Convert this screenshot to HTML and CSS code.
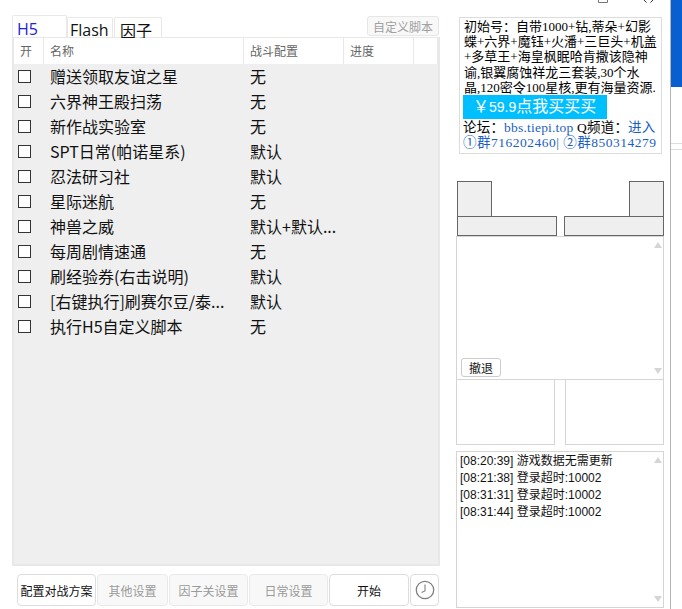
FILE: index.html
```html
<!DOCTYPE html>
<html>
<head>
  <meta charset="utf-8" />
  <title>H5</title>
  <link rel="stylesheet" href="styles.css">
</head>
<body>
<div class="app">
  <div class="left">
    <div class="tabs">
      <div class="tab active">H5</div>
      <div class="tab flash">Flash</div>
      <div class="tab yinzi">因子</div>
      <button class="scriptBtn">自定义脚本</button>
    </div>
    <div class="panel">
      <div class="head">
        <div class="hcell c1">开</div>
        <div class="hcell c2">名称</div>
        <div class="hcell c3">战斗配置</div>
        <div class="hcell c4">进度</div>
        <div class="hcell c5"></div>
      </div>
      <div class="list">
        <div class="row"><span class="chk"></span><span class="name">赠送领取友谊之星</span><span class="conf">无</span></div>
        <div class="row"><span class="chk"></span><span class="name">六界神王殿扫荡</span><span class="conf">无</span></div>
        <div class="row"><span class="chk"></span><span class="name">新作战实验室</span><span class="conf">无</span></div>
        <div class="row"><span class="chk"></span><span class="name">SPT日常(帕诺星系)</span><span class="conf">默认</span></div>
        <div class="row"><span class="chk"></span><span class="name">忍法研习社</span><span class="conf">默认</span></div>
        <div class="row"><span class="chk"></span><span class="name">星际迷航</span><span class="conf">无</span></div>
        <div class="row"><span class="chk"></span><span class="name">神兽之威</span><span class="conf">默认+默认...</span></div>
        <div class="row"><span class="chk"></span><span class="name">每周剧情速通</span><span class="conf">无</span></div>
        <div class="row"><span class="chk"></span><span class="name">刷经验券(右击说明)</span><span class="conf">默认</span></div>
        <div class="row"><span class="chk"></span><span class="name">[右键执行]刷赛尔豆/泰...</span><span class="conf">默认</span></div>
        <div class="row"><span class="chk"></span><span class="name">执行H5自定义脚本</span><span class="conf">无</span></div>
      </div>
    </div>
    <div class="footer">
      <button class="btn b1">配置对战方案</button>
      <button class="btn b2 off">其他设置</button>
      <button class="btn b3 off">因子关设置</button>
      <button class="btn b4 off">日常设置</button>
      <button class="btn b5">开始</button>
      <button class="btn b6">
        <svg width="20" height="20" viewBox="0 0 20 20"><circle cx="10" cy="10" r="8.7" fill="none" stroke="#808080" stroke-width="1.3"/><path d="M10 4.5V11L6.5 12.5" fill="none" stroke="#808080" stroke-width="1.1"/></svg>
      </button>
    </div>
  </div>
  <div class="right">
    <div class="ad">
      <div class="adText">
        <div>初始号：自带1000+钻,蒂朵+幻影</div>
        <div>蝶+六界+魔钰+火潘+三巨头+机盖</div>
        <div>+多草王+海皇枫眠哈肯撒该隐神</div>
        <div>谕,银翼腐蚀祥龙三套装,30个水</div>
        <div>晶,120密令100星核,更有海量资源.</div>
      </div>
      <div class="buy">￥<span class="price">59.9</span>点我买买买</div>
      <div class="adLine">论坛：<span class="link">bbs.tiepi.top</span> Q频道：<span class="link">进入</span></div>
      <div class="adLine link groups">①群716202460| ②群850314279</div>
    </div>
    <div class="shapes">
      <div class="shape">
        <div class="box"></div>
        <div class="bar"></div>
      </div>
      <div class="shape flip">
        <div class="box"></div>
        <div class="bar"></div>
      </div>
    </div>
    <div class="scrollBox mid">
      <i class="arrow up"></i>
      <button class="retreat">撤退</button>
      <i class="arrow down"></i>
    </div>
    <div class="twoBox">
      <div class="emptyBox"></div>
      <div class="emptyBox"></div>
    </div>
    <div class="scrollBox log">
      <i class="arrow up"></i>
      <div>[08:20:39] 游戏数据无需更新</div>
      <div>[08:21:38] 登录超时:10002</div>
      <div>[08:31:31] 登录超时:10002</div>
      <div>[08:31:44] 登录超时:10002</div>
      <i class="arrow down"></i>
    </div>
  </div>
  <svg class="winBtns" width="56" height="3" viewBox="0 0 56 3">
    <path d="M0.5 0V2.5H9.5V0" fill="none" stroke="#777" stroke-width="1"/>
    <path d="M46 0L48.5 2.5M55 0L52.5 2.5" fill="none" stroke="#333" stroke-width="1"/>
  </svg>
  <div class="edge">
    <div class="edgeBlue"></div>
    <div class="edgeLine"></div>
    <div class="edgeLine second"></div>
  </div>
</div>
</body>
</html>
```

FILE: styles.css
```css
* {
  box-sizing: border-box;
}

html, body {
  margin: 0;
  height: 100%;
  background: #fff;
  overflow: hidden;
}

body {
  font-family: "Noto Sans CJK SC", "Liberation Sans", sans-serif;
  color: #111;
}

.app {
  display: flex;
  width: 682px;
  height: 609px;
}

.left {
  width: 440px;
  padding: 15px 0 0 12px;
}

.tabs {
  display: flex;
  align-items: flex-end;
  height: 22px;
}

.tab {
  border: 1px solid #e8e8e8;
  border-bottom: none;
  border-radius: 2px 2px 0 0;
  font-size: 16px;
  line-height: 20px;
  height: 20px;
  padding-left: 4px;
  margin-right: 1px;
}

.tab.active {
  width: 55px;
  height: 22px;
  color: #2222dd;
  background: #fff;
  font-family: "Open Sans", sans-serif;
  line-height: 26px;
  margin-right: 0;
}

.tab.flash {
  width: 46px;
  padding-left: 2px;
  font-family: "Open Sans", sans-serif;
  line-height: 24px;
}

.tab.yinzi {
  width: 48px;
  padding-left: 5px;
  line-height: 24px;
}

.scriptBtn {
  margin-left: auto;
  margin-right: 1px;
  margin-bottom: 1px;
  width: 72px;
  height: 20px;
  padding: 0;
  font: 12px "Noto Sans CJK SC", sans-serif;
  color: #a0a0a0;
  background: #f8f8f8;
  border: 1px solid #e6e6e6;
  border-radius: 3px;
}

.panel {
  width: 428px;
  height: 529px;
  border: 2px solid #e8e8e8;
  border-top-width: 1px;
  display: flex;
  flex-direction: column;
}

.head {
  display: flex;
  height: 26px;
  background: #fff;
  font-size: 12px;
  color: #666;
}

.hcell {
  border-right: 1px solid #e8e8e8;
  padding-left: 6px;
  line-height: 26px;
}

.c1 { width: 30px; }
.c2 { width: 200px; }
.c3 { width: 100px; }
.c4 { width: 70px; }
.c5 { width: 24px; }

.list {
  flex: 1;
  background: #efefef;
}

.row {
  display: flex;
  align-items: center;
  height: 25px;
  font-size: 16px;
  white-space: nowrap;
}

.chk {
  width: 13px;
  height: 13px;
  margin-left: 4px;
  margin-right: 19px;
  border: 1px solid #333;
  background: #fff;
}

.name {
  width: 200px;
  padding-bottom: 2px;
}

.conf {
  padding-bottom: 2px;
}

.footer {
  display: flex;
  align-items: center;
  margin-top: 8px;
  padding-left: 5px;
  gap: 1px;
}

.btn {
  height: 32px;
  padding: 0;
  font: 12px "Noto Sans CJK SC", sans-serif;
  color: #111;
  background: #fff;
  border: 1px solid #ddd;
  border-radius: 4px;
  white-space: nowrap;
}

.btn.off {
  color: #9a9a9a;
  background: #f8f8f8;
  border-color: #eaeaea;
}

.b1 { width: 79px; }
.b2 { width: 71px; }
.b3 { width: 79px; }
.b4 { width: 79px; }
.b5 { width: 80px; }
.b6 {
  width: 29px;
  display: flex;
  align-items: center;
  justify-content: center;
}

.right {
  width: 208px;
  margin-left: 16px;
  padding-top: 17px;
}

.ad {
  width: 203px;
  height: 137px;
  margin-left: 3px;
  border: 1px solid #ddd;
  padding: 1px 4px;
  font-family: "Liberation Serif", "Noto Sans CJK SC", serif;
  font-size: 13px;
  line-height: 15.2px;
  color: #000;
}

.adText {
  white-space: nowrap;
}

.buy {
  width: 144px;
  height: 24px;
  margin: 0 0 0 -1px;
  background: #00bfff;
  color: #fff;
  font-family: "Liberation Sans", "Noto Sans CJK SC", sans-serif;
  font-size: 16px;
  line-height: 24px;
  padding-left: 10px;
  white-space: nowrap;
}

.price {
  font-size: 14px;
}

.adLine {
  line-height: 15px;
  white-space: nowrap;
  margin-top: 1px;
  margin-left: -1px;
  font-size: 13.5px;
  letter-spacing: 0.2px;
}

.groups {
  margin-top: 0;
  letter-spacing: 0.5px;
}

.link {
  color: #1c5fc4;
}

.shapes {
  display: flex;
  justify-content: space-between;
  width: 207px;
  margin: 27px 0 0 1px;
}

.shape {
  width: 100px;
}

.box {
  width: 35px;
  height: 35px;
  background: #efefef;
  border: 1px solid #666;
  border-bottom: none;
}

.bar {
  height: 20px;
  background: #efefef;
  border: 1px solid #666;
}

.flip .box {
  margin-left: auto;
}

.scrollBox {
  position: relative;
  width: 208px;
  border: 1px solid #d5d5d5;
}

.mid {
  height: 144px;
  display: flex;
  align-items: flex-end;
  padding: 0 0 2px 4px;
}

.retreat {
  width: 40px;
  height: 19px;
  padding: 0;
  font: 12px "Noto Sans CJK SC", sans-serif;
  color: #111;
  background: #fff;
  border: 1px solid #ccc;
  border-radius: 3px;
}

.arrow {
  position: absolute;
  right: 1px;
  width: 0;
  height: 0;
  border-left: 4px solid transparent;
  border-right: 4px solid transparent;
}

.arrow.up {
  top: 5px;
  border-bottom: 6px solid #d5d5d5;
}

.arrow.down {
  bottom: 5px;
  border-top: 6px solid #d5d5d5;
}

.twoBox {
  display: flex;
  justify-content: space-between;
  width: 208px;
  height: 65px;
}

.emptyBox {
  width: 99px;
  border: 1px solid #d5d5d5;
  border-top: none;
}

.log {
  height: 157px;
  margin-top: 6px;
  padding: 1px 3px;
  font-family: "Liberation Sans", "Noto Sans CJK SC", sans-serif;
  font-size: 12px;
  line-height: 17px;
}

/* window chrome peeking in at the top and right edge */
.winBtns {
  position: absolute;
  top: 0;
  left: 598px;
}

.edge {
  position: absolute;
  top: 0;
  left: 670px;
  bottom: 0;
  width: 12px;
  border-left: 1px solid #b5b5b5;
}

.edgeBlue {
  height: 87px;
  background: #0a5fd0;
}

.edgeLine {
  height: 1px;
  margin-top: 56px;
  background: #ddd;
}

.edgeLine.second {
  margin-top: 5px;
}
```
